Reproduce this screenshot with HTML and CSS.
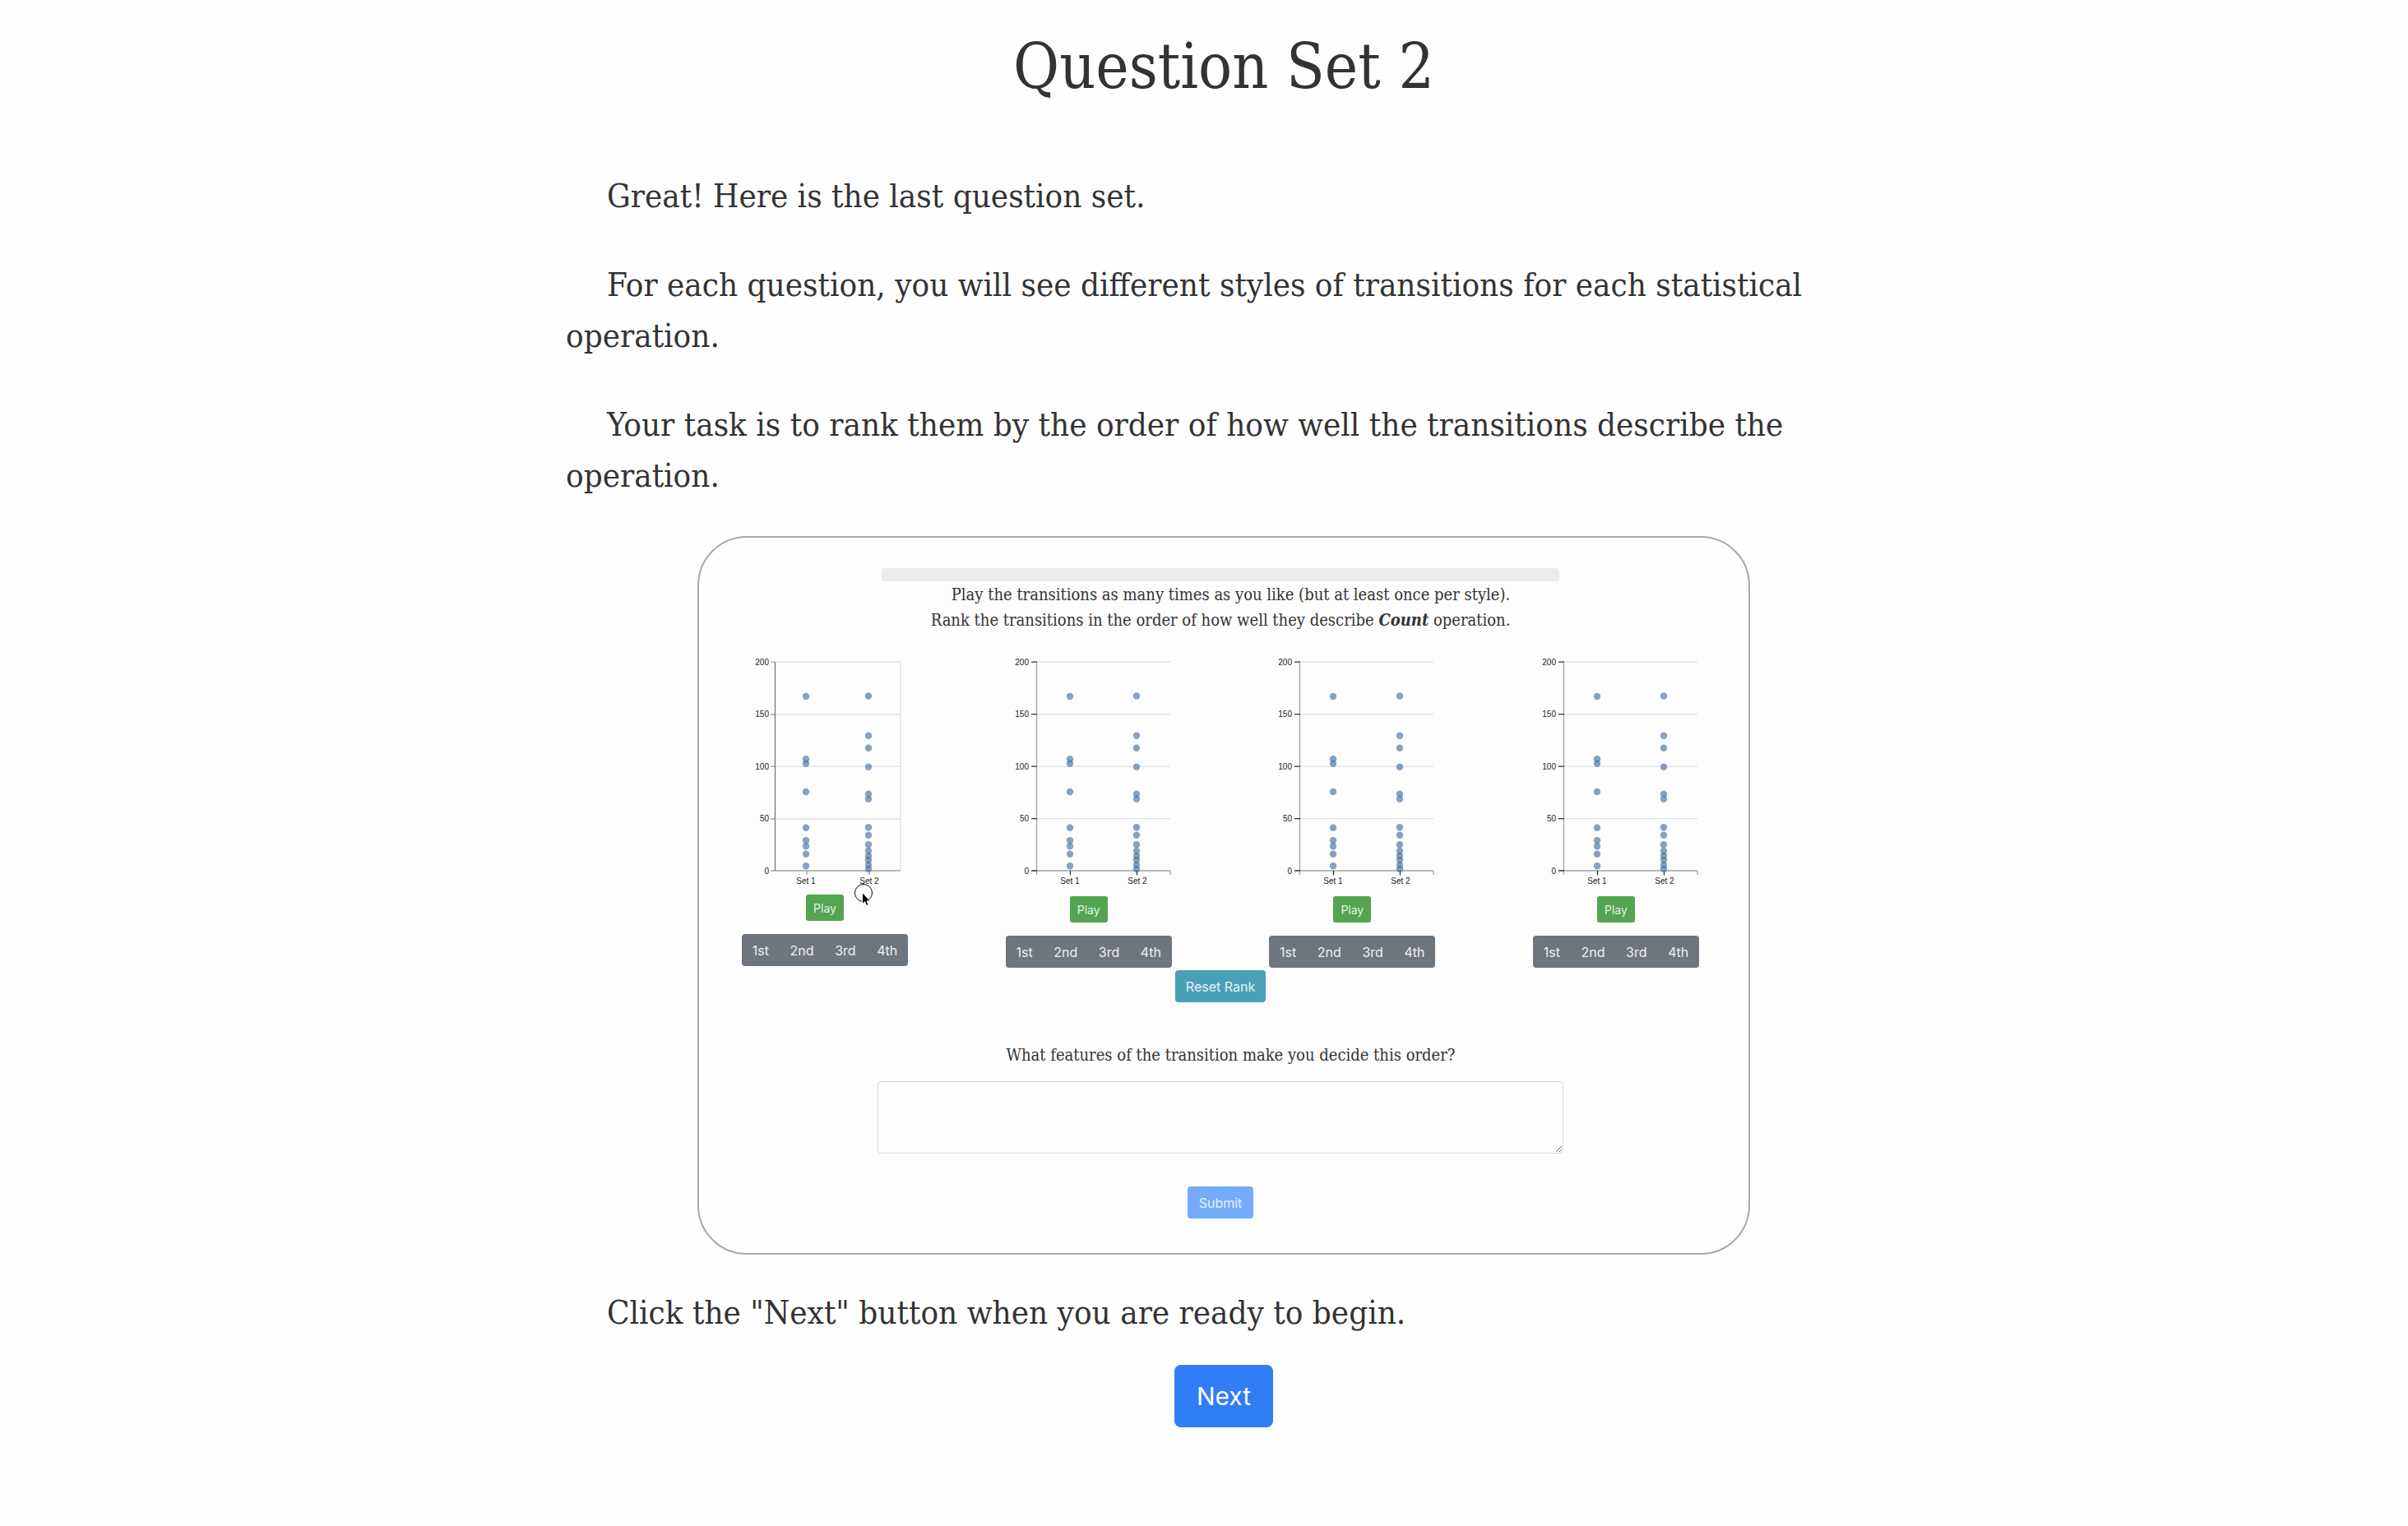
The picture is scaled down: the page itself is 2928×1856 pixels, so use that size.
FILE: index.html
```html
<!DOCTYPE html>
<html lang="en">
<head>
<meta charset="utf-8">
<title>Question Set 2</title>
<link rel="stylesheet" href="styles.css">
</head>
<body>
<main class="page">
  <h1 class="title">Question Set 2</h1>
  <p class="para">Great! Here is the last question set.</p>
  <p class="para">For each question, you will see different styles of transitions for each statistical operation.</p>
  <p class="para">Your task is to rank them by the order of how well the transitions describe the operation.</p>

  <section class="frame">
    <div class="screen">
      <div class="progress"></div>
      <p class="hint hint-indent">Play the transitions as many times as you like (but at least once per style).</p>
      <p class="hint">Rank the transitions in the order of how well they describe <strong class="op">Count</strong> operation.</p>

      <div class="charts">
        <div class="col">
          <svg class="chart" width="202" height="293" viewBox="0 0 202 293">
            <defs>
              <g id="dots1" class="dots">
                <circle cy="52" r="4.2"/><circle cy="128.3" r="4.2"/><circle cy="133.7" r="4.2"/><circle cy="168" r="4.2"/><circle cy="211.7" r="4.2"/><circle cy="227.3" r="4.2"/><circle cy="234.3" r="4.2"/><circle cy="243.7" r="4.2"/><circle cy="258.3" r="4.2"/>
              </g>
              <g id="dots2" class="dots">
                <circle cy="51.5" r="4.2"/><circle cy="99.7" r="4.2"/><circle cy="114.7" r="4.2"/><circle cy="137.7" r="4.2"/><circle cy="170.7" r="4.2"/><circle cy="176.7" r="4.2"/><circle cy="211.3" r="4.2"/><circle cy="220.7" r="4.2"/><circle cy="232.3" r="4.2"/><circle cy="240" r="4.2"/><circle cy="246" r="4.2"/><circle cy="251" r="4.2"/><circle cy="257" r="4.2"/><circle cy="262" r="4.2"/>
              </g>
              <g id="axes">
                <path class="grid" d="M38 10.2H200M38 73.7H200M38 137.2H200M38 200.7H200"/>
                <path class="axis" d="M37.5 10V269M37.5 264H200M200 264V269"/>
                <path class="tick" d="M31 10.2H38M31 73.7H38M31 137.2H38M31 200.7H38M31 264H38M78.5 264V269.500M159.500 264V269.500"/>
              </g>
            </defs>
            <path class="grid" d="M41 10.2H193M41 74H193M41 137.2H193M41 201H193M193 10V264"/>
            <path class="axis" d="M35 10.2H40M35 74H40M35 137.2H40M35 201H40M35 264H193M79 264V269M155 264V269"/>
            <path class="axis dark" d="M40.500 10V264"/>
            <use href="#dots1" x="78"/><use href="#dots2" x="154"/>
            <g class="ylab"><text x="33" y="14">200</text><text x="33" y="77">150</text><text x="33" y="141">100</text><text x="33" y="204">50</text><text x="33" y="268">0</text></g>
            <g class="xlab"><text x="78" y="280">Set 1</text><text x="155" y="280">Set 2</text></g>
          </svg>
          <button class="btn play" type="button">Play</button>
          <div class="ranks"><button type="button">1st</button><button type="button">2nd</button><button type="button">3rd</button><button type="button">4th</button></div>
          <svg class="pointer" width="26" height="30" viewBox="0 0 26 30">
            <circle cx="12" cy="13" r="10.500" fill="none" stroke="#111" stroke-width="1"/>
            <path d="M10.500 12.500V26.500L13.600 23.800L15.600 28.500L18 27.500L16 22.900H20.200Z" fill="#000" stroke="#fff" stroke-width="1"/>
          </svg>
        </div>
        <div class="col">
          <svg class="chart" width="202" height="295" viewBox="0 0 202 295">
            <use href="#axes"/><use href="#dots1" x="78"/><use href="#dots2" x="159"/>
            <g class="ylab"><text x="28" y="14">200</text><text x="28" y="77">150</text><text x="28" y="141">100</text><text x="28" y="204">50</text><text x="28" y="268">0</text></g>
            <g class="xlab"><text x="78" y="280">Set 1</text><text x="160" y="280">Set 2</text></g>
          </svg>
          <button class="btn play" type="button">Play</button>
          <div class="ranks"><button type="button">1st</button><button type="button">2nd</button><button type="button">3rd</button><button type="button">4th</button></div>
        </div>
        <div class="col">
          <svg class="chart" width="202" height="295" viewBox="0 0 202 295">
            <use href="#axes"/><use href="#dots1" x="78"/><use href="#dots2" x="159"/>
            <g class="ylab"><text x="28" y="14">200</text><text x="28" y="77">150</text><text x="28" y="141">100</text><text x="28" y="204">50</text><text x="28" y="268">0</text></g>
            <g class="xlab"><text x="78" y="280">Set 1</text><text x="160" y="280">Set 2</text></g>
          </svg>
          <button class="btn play" type="button">Play</button>
          <div class="ranks"><button type="button">1st</button><button type="button">2nd</button><button type="button">3rd</button><button type="button">4th</button></div>
        </div>
        <div class="col">
          <svg class="chart" width="202" height="295" viewBox="0 0 202 295">
            <use href="#axes"/><use href="#dots1" x="78"/><use href="#dots2" x="159"/>
            <g class="ylab"><text x="28" y="14">200</text><text x="28" y="77">150</text><text x="28" y="141">100</text><text x="28" y="204">50</text><text x="28" y="268">0</text></g>
            <g class="xlab"><text x="78" y="280">Set 1</text><text x="160" y="280">Set 2</text></g>
          </svg>
          <button class="btn play" type="button">Play</button>
          <div class="ranks"><button type="button">1st</button><button type="button">2nd</button><button type="button">3rd</button><button type="button">4th</button></div>
        </div>
      </div>

      <button class="btn reset" type="button">Reset Rank</button>
      <label class="hint hint-indent question" for="reason">What features of the transition make you decide this order?</label>
      <textarea class="reason" id="reason"></textarea>
      <button class="btn submit" type="button">Submit</button>
    </div>
  </section>

  <p class="para">Click the "Next" button when you are ready to begin.</p>
  <button class="btn next" type="button">Next</button>
</main>
</body>
</html>
```
FILE: styles.css
```css
* { box-sizing: border-box; }

body {
  margin: 0;
  padding-left: 48px;
  background: #fefefe;
  color: #333;
  font-family: Georgia, "DejaVu Serif Condensed", "DejaVu Serif", serif;
}

.page {
  display: flex;
  flex-direction: column;
  align-items: center;
  max-width: 1600px;
  margin: 0 auto;
  padding: 35px 0 120px;
}

.title {
  margin: 0 0 34px;
  font-size: 76px;
  font-weight: 400;
  line-height: 92px;
}

.para {
  width: 100%;
  margin: 46px 0 0;
  font-size: 40px;
  line-height: 62px;
  text-indent: 50px;
}

.frame {
  width: 80%;
  margin-top: 43px;
  padding: 30px;
  border: 2px solid #a9a9a9;
  border-radius: 60px;
}

.frame + .para { margin-top: 39px; }

.screen {
  display: flex;
  flex-direction: column;
  align-items: center;
  padding: 7px 8px 12px 0;
  border-radius: 30px;
  background: #fdfdfd;
}

.progress {
  width: 824px;
  max-width: 100%;
  height: 16px;
  margin-bottom: 1px;
  border-radius: 4px;
  background: #e9ebed;
}

.hint {
  margin: 0;
  font-size: 20px;
  line-height: 31px;
  text-align: center;
}

.hint-indent { padding-left: 25px; }

.op { font-style: italic; }

.charts {
  display: flex;
  justify-content: space-between;
  align-self: stretch;
  margin-top: 25px;
  padding: 0 22px;
}

.col {
  position: relative;
  display: flex;
  flex-direction: column;
  align-items: center;
  width: 202px;
}

.chart { display: block; }
.grid, .axis, .tick { fill: none; }
.grid { stroke: #e0e1e2; stroke-width: 1.3; }
.axis { stroke: #a2a2a2; stroke-width: 1.3; }
.dark { stroke: #777; }
.tick { stroke: #333; stroke-width: 1.3; }
.dots { fill: #4c78a8; fill: #49709f; fill-opacity: .65; }
.ylab, .xlab {
  fill: #222;
  font-family: "Liberation Sans", Arial, sans-serif;
  font-size: 10px;
}
.ylab { text-anchor: end; }
.xlab { text-anchor: middle; }

.pointer {
  position: absolute;
  left: 136px;
  top: 278px;
}

.btn, .ranks button {
  padding: 0;
  border: 0;
  color: #fff;
  font-family: Inter, sans-serif;
}

.play {
  width: 46px;
  height: 32px;
  border-radius: 3px;
  background: #53a551;
  color: #e6f2e6;
  font-size: 14px;
}

.ranks {
  display: flex;
  width: 100%;
  height: 39px;
  margin-top: 16px;
  border-radius: 4px;
  background: #6e757d;
}

.ranks button {
  flex: 1 1 auto;
  background: none;
  color: #f0f1f2;
  font-size: 16px;
}

.reset {
  width: 110px;
  height: 39px;
  margin-top: 3px;
  border-radius: 4px;
  background: #4aa1b5;
  color: #e4f1f4;
  font-size: 16px;
}

.question { margin-top: 49px; }

.reason {
  width: 834px;
  max-width: 100%;
  height: 88px;
  margin-top: 16px;
  border: 1px solid #d5d8dc;
  border-radius: 4px;
  background: #fdfdfd;
  font: 16px Inter, sans-serif;
}

.submit {
  width: 80px;
  height: 39px;
  margin-top: 40px;
  border-radius: 4px;
  background: #75acf9;
  color: #e8f1fe;
  font-size: 16px;
}

.next {
  width: 120px;
  height: 76px;
  margin-top: 33px;
  border-radius: 8px;
  background: #307df6;
  font-size: 30px;
}
```
